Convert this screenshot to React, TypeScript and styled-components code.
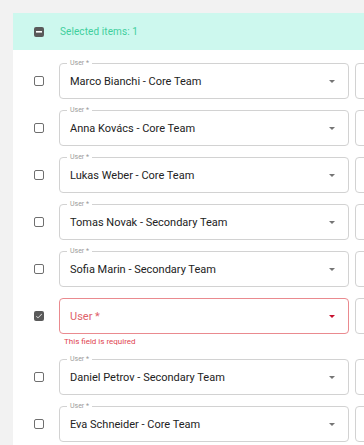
import styled, { createGlobalStyle } from 'styled-components';

const GlobalStyle = createGlobalStyle`
  html, body {
    margin: 0;
    padding: 0;
    overflow: hidden;
    background: #f2f2f2;
    font-family: Roboto, "Liberation Sans", Arial, sans-serif;
  }
`;

const Page = styled.div`
  padding: 13px 0 0 13px;
  width: 700px;
`;

const Card = styled.div`
  background: #fff;
  min-height: 440px;
`;

const SelectionBar = styled.div`
  height: 37px;
  background: #cdf8ee;
  display: flex;
  align-items: center;
  padding-left: 21px;
  gap: 16px;
`;

const SelectedText = styled.span`
  font-size: 10px;
  color: #3fcf9d;
  letter-spacing: 0.1px;
`;

const Rows = styled.div`
  display: flex;
  flex-direction: column;
  gap: 11px;
  padding-top: 13px;
`;

const Row = styled.div`
  display: grid;
  grid-template-columns: 40px 290px 340px;
  column-gap: 6px;
  align-items: start;
`;

const CheckCell = styled.div`
  height: 36px;
  display: flex;
  align-items: center;
  padding-left: 21px;
`;

const Box = styled.div<{ $filled?: boolean }>`
  width: 10px;
  height: 10px;
  box-sizing: border-box;
  border-radius: 2px;
  border: ${p => (p.$filled ? 'none' : '1.3px solid #6f6f6f')};
  background: ${p => (p.$filled ? '#5a5a5a' : '#fff')};
  display: flex;
  align-items: center;
  justify-content: center;
`;

const FieldCol = styled.div`
  display: flex;
  flex-direction: column;
`;

const Field = styled.div<{ $error?: boolean }>`
  position: relative;
  height: 36px;
  box-sizing: border-box;
  border: 1px solid ${p => (p.$error ? '#ea8a8f' : '#d2d2d2')};
  border-radius: 4px;
  display: flex;
  align-items: center;
  padding: 0 13px 0 10px;
  background: #fff;
`;

const FloatLabel = styled.span`
  position: absolute;
  top: -5px;
  left: 7px;
  padding: 0 3px;
  background: #fff;
  font-size: 7px;
  line-height: 9px;
  color: #9a9a9a;
`;

const Value = styled.span<{ $error?: boolean }>`
  flex: 1;
  font-size: 11px;
  color: ${p => (p.$error ? '#e0626b' : '#222')};
  white-space: nowrap;
`;

const Arrow = styled.span<{ $error?: boolean }>`
  width: 0;
  height: 0;
  border-left: 3px solid transparent;
  border-right: 3px solid transparent;
  border-top: 3px solid ${p => (p.$error ? '#c8102e' : '#757575')};
`;

const Helper = styled.div`
  font-size: 8px;
  color: #e0454f;
  margin: 3px 0 0 5px;
  height: 11px;
`;

const rows = [
  { name: 'Marco Bianchi - Core Team' },
  { name: 'Anna Kovács - Core Team' },
  { name: 'Lukas Weber - Core Team' },
  { name: 'Tomas Novak - Secondary Team' },
  { name: 'Sofia Marin - Secondary Team' },
  { name: '', error: true, checked: true },
  { name: 'Daniel Petrov - Secondary Team' },
  { name: 'Eva Schneider - Core Team' },
];

const Dash = () => (
  <svg width="6" height="2" viewBox="0 0 6 2">
    <rect width="6" height="1.6" fill="#fff" />
  </svg>
);

const Tick = () => (
  <svg width="8" height="8" viewBox="0 0 24 24">
    <path d="M9 16.2 4.8 12l-1.4 1.4L9 19 21 7l-1.4-1.4z" fill="#fff" />
  </svg>
);

export default function App() {
  return (
    <>
      <GlobalStyle />
      <Page>
        <Card>
          <SelectionBar>
            <Box $filled>
              <Dash />
            </Box>
            <SelectedText>Selected items: 1</SelectedText>
          </SelectionBar>
          <Rows>
            {rows.map((r, i) => (
              <Row key={i}>
                <CheckCell>
                  <Box $filled={r.checked}>{r.checked && <Tick />}</Box>
                </CheckCell>
                <FieldCol>
                  <Field $error={r.error}>
                    {!r.error && <FloatLabel>User *</FloatLabel>}
                    <Value $error={r.error}>{r.error ? 'User *' : r.name}</Value>
                    <Arrow $error={r.error} />
                  </Field>
                  {r.error && <Helper>This field is required</Helper>}
                </FieldCol>
                <Field />
              </Row>
            ))}
          </Rows>
        </Card>
      </Page>
    </>
  );
}
